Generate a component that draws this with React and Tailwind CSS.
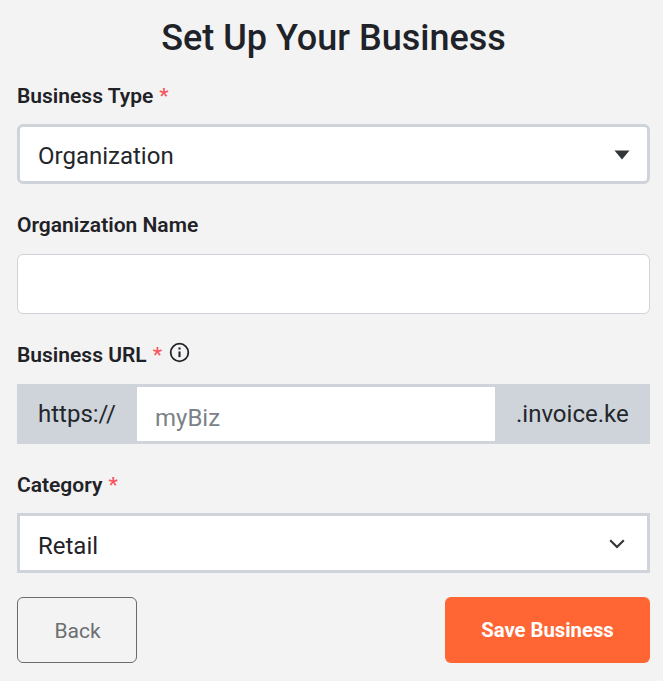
import React from "react";

const Required = () => <span className="text-[#f8545c] font-medium ml-[6px]">*</span>;

const FieldLabel = ({ children }) => (
  <label className="flex items-center h-6 text-[21px] leading-6 font-semibold text-[#1f2226]">{children}</label>
);

const App = () => {
  return (
    <div className="w-[663px] h-[681px] bg-[#f3f3f3] pl-[17px] pr-[13px] pt-[16px] font-['Roboto',sans-serif] text-[#23262b] overflow-hidden">
      <h1 className="text-center text-[36px] leading-[44px] font-medium text-[#1f2329]">Set Up Your Business</h1>

      <div className="mt-[24px]">
        <FieldLabel>
          Business Type <Required />
        </FieldLabel>
        <div className="mt-[16px] h-[60px] flex items-center justify-between bg-white border-[3px] border-[#ced4da] rounded-md pl-[18px] pr-[17px]">
          <span className="text-[24px] leading-8 mt-[4px]">Organization</span>
          <svg width="16" height="10" viewBox="0 0 16 10" className="mt-px">
            <path d="M0.5 0.5h15L8 9.5z" fill="#333639" />
          </svg>
        </div>
      </div>

      <div className="mt-[29px]">
        <FieldLabel>Organization Name</FieldLabel>
        <input type="text" className="block w-full mt-[17px] h-[60px] bg-white border border-[#ced4da] rounded-md" />
      </div>

      <div className="mt-[29px]">
        <FieldLabel>
          Business URL <Required />
          <svg width="21" height="21" viewBox="0 0 20 20" fill="none" stroke="#1f2226" strokeWidth="1.7" className="ml-[7px] -mt-[6px]">
            <circle cx="10" cy="10" r="8.4" />
            <path d="M10 9v5.4" strokeWidth="2" />
            <path d="M10 5.2v2" strokeWidth="2" />
          </svg>
        </FieldLabel>
        <div className="mt-[17px] h-[60px] flex bg-[#ced4da] py-[3px]">
          <div className="w-[120px] pl-[21px] flex items-center text-[24px] text-[#23262b]">https://</div>
          <div className="w-[358px] bg-white pl-[18px] pt-[7px] flex items-center text-[24px] text-[#7c8289]">myBiz</div>
          <div className="flex-1 pl-[21px] flex items-center text-[24px] text-[#23262b]">.invoice.ke</div>
        </div>
      </div>

      <div className="mt-[29px]">
        <FieldLabel>
          Category <Required />
        </FieldLabel>
        <div className="mt-[16px] h-[60px] flex items-center justify-between bg-white border-[3px] border-[#ced4da] pl-[18px] pr-[22px]">
          <span className="text-[24px] leading-8 text-[#1f2329] mt-[6px]">Retail</span>
          <svg width="16" height="10" viewBox="0 0 16 10" fill="none" stroke="#34373b" strokeWidth="2.2" className="mt-[2px]">
            <path d="M1.2 1.2L8 8l6.8-6.8" />
          </svg>
        </div>
      </div>

      <div className="mt-[24px] flex justify-between">
        <button className="w-[120px] h-[66px] border border-[#6b6b6b] rounded-md pl-px pt-[4px] text-[21px] text-[#6c6e70]">Back</button>
        <button className="w-[205px] h-[66px] bg-[#ff6633] rounded-md text-[20.3px] font-bold text-white">Save Business</button>
      </div>
    </div>
  );
};

export default App;
